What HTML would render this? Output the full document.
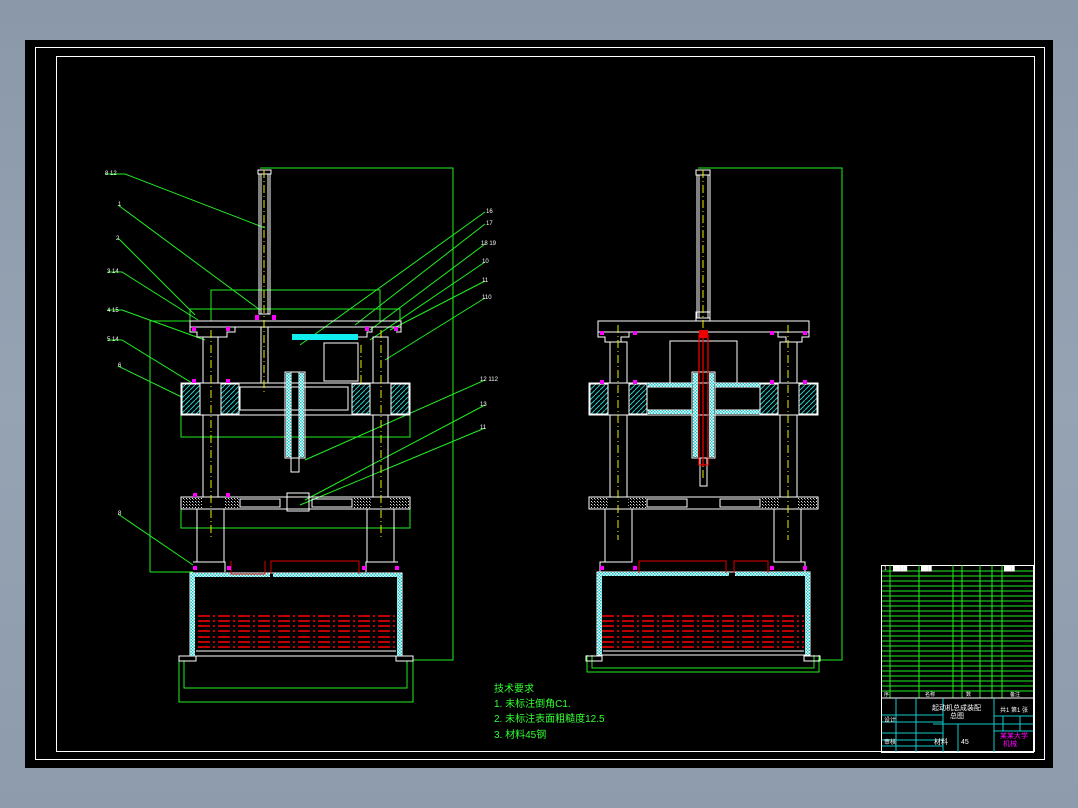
<!DOCTYPE html>
<html><head><meta charset="utf-8"><style>
html,body{margin:0;padding:0;width:1078px;height:808px;overflow:hidden;background:linear-gradient(#8a98aa,#95a3b3 50%,#8d9bad);}
svg{position:absolute;left:0;top:0}
text{font-family:"Liberation Sans","Noto Sans CJK SC",sans-serif;}
</style></head><body>
<svg width="1078" height="808" viewBox="0 0 1078 808">
<defs>
<pattern id="hc" width="5" height="5" patternUnits="userSpaceOnUse"><rect width="5" height="5" fill="#000"/><path d="M0 5L5 0" stroke="#2cc" stroke-width="1"/></pattern>
<pattern id="hw" width="3" height="3" patternUnits="userSpaceOnUse"><rect width="3" height="3" fill="#000"/><rect width="1" height="1" fill="#ddd"/><rect x="1" y="1" width="1" height="1" fill="#888"/></pattern>
<pattern id="dc" width="3" height="3" patternUnits="userSpaceOnUse"><rect width="3" height="3" fill="#fff"/><rect width="1.5" height="1.5" fill="#1cc"/><rect x="1.5" y="1.5" width="1.5" height="1.5" fill="#1cc"/></pattern>
</defs>
<rect x="25" y="40" width="1028" height="728" fill="#000"/>
<rect x="35.5" y="47.5" width="1009" height="712" fill="none" stroke="#fff" stroke-width="1"/>
<rect x="56.5" y="56.5" width="978" height="695" fill="none" stroke="#fff" stroke-width="1"/>

<!-- LEFT VIEW -->
<g fill="none" stroke-width="1">
<!-- green leader / dims -->
<g stroke="#2e2">
<polyline points="260,168 453,168 453,660 413,660"/>
<polyline points="150,572 150,321 190,321"/>
<polyline points="150,572 193,572"/>
<rect x="190" y="309" width="210" height="12"/>
<polyline points="211,321 211,290 380,290 380,321"/>
<rect x="181" y="415" width="229" height="22"/>
<rect x="181" y="509" width="229" height="19"/>
<polyline points="184,661 184,688 407,688 407,661"/>
<polyline points="179,661 179,702 413,702 413,661"/>
<path d="M105 174H125L265 228M118 205L260 310M118 238L195 315M108 272H122L198 320M108 310H122L205 340M108 340H122L192 383M118 366L198 405M118 514L193 565"/>
<path d="M485 212L300 345M485 224L355 325M485 244L370 330M485 262L370 340M485 281L390 330M485 298L385 360M485 380L305 460M485 405L305 500M485 428L300 505"/>
</g>
<!-- cylinder -->
<g stroke="#fff">
<rect x="258" y="170" width="13" height="4"/>
<rect x="259" y="174" width="11" height="140"/>
<line x1="261" y1="174" x2="261" y2="314"/><line x1="268" y1="174" x2="268" y2="314"/>
<rect x="190" y="321" width="211" height="6"/>
<path d="M190 327v5h7v5h30v-5h8v-5M372 327v5h-5v5h-10M401 327v5h-5"/>
<rect x="203" y="337" width="15" height="46"/>
<rect x="373" y="337" width="15" height="46"/>
<line x1="261" y1="327" x2="261" y2="383"/><line x1="268" y1="327" x2="268" y2="383"/>
<rect x="181" y="383" width="229" height="32"/>
<rect x="240" y="387" width="108" height="23"/>
<rect x="285" y="372" width="20" height="86"/>
<rect x="291" y="372" width="8" height="100"/>
<rect x="324" y="343" width="34" height="38"/>
<rect x="203" y="415" width="15" height="82"/>
<rect x="373" y="415" width="15" height="82"/>
<rect x="181" y="497" width="229" height="12"/>
<rect x="240" y="499" width="40" height="8"/>
<rect x="312" y="499" width="40" height="8"/>
<rect x="287" y="493" width="22" height="18"/>
<rect x="197" y="509" width="27" height="53"/>
<rect x="367" y="509" width="27" height="53"/>
<path d="M193 562h32v10M366 572v-10h32"/>
<rect x="190" y="573" width="212" height="83"/>
<line x1="196" y1="651" x2="396" y2="651"/>
<rect x="179" y="656" width="17" height="5"/><rect x="396" y="656" width="17" height="5"/>
</g>
<rect x="292" y="334" width="66" height="6" fill="#1ee" stroke="none"/>
<g fill="url(#hc)" stroke="#fff">
<rect x="182" y="384" width="18" height="30"/><rect x="221" y="384" width="18" height="30"/>
<rect x="352" y="384" width="18" height="30"/><rect x="391" y="384" width="18" height="30"/>
</g>
<rect x="286" y="373" width="5" height="84" fill="url(#dc)"/>
<rect x="299" y="373" width="5" height="84" fill="url(#dc)"/>
<g fill="url(#hw)"><rect x="182" y="498" width="20" height="10"/><rect x="224" y="498" width="15" height="10"/><rect x="353" y="498" width="19" height="10"/><rect x="390" y="498" width="19" height="10"/></g>
<g fill="url(#dc)"><rect x="190" y="573" width="5" height="83"/><rect x="397" y="573" width="5" height="83"/><rect x="195" y="573" width="75" height="4"/><rect x="273" y="573" width="124" height="4"/></g>
<g stroke="#ee0" stroke-dasharray="8,3,1,3"><line x1="264" y1="170" x2="264" y2="395"/><line x1="211" y1="330" x2="211" y2="540"/><line x1="381" y1="330" x2="381" y2="540"/><line x1="361" y1="345" x2="361" y2="383"/></g>
<g stroke="#f00" stroke-width="1.5" stroke-dasharray="12,3,2,3">
<line x1="198" y1="616" x2="397" y2="616"/><line x1="198" y1="621" x2="397" y2="621"/><line x1="198" y1="626" x2="397" y2="626"/><line x1="198" y1="631" x2="397" y2="631"/><line x1="198" y1="637" x2="397" y2="637"/><line x1="198" y1="642" x2="397" y2="642"/><line x1="198" y1="647" x2="397" y2="647"/>
</g>
<path d="M231 561V574H265V561M271 574V561H359V574" stroke="#d00"/>
<g fill="#f0f" stroke="none"><rect x="255" y="315" width="4" height="5"/><rect x="272" y="315" width="4" height="5"/><rect x="192" y="327" width="4" height="4"/><rect x="226" y="327" width="4" height="4"/><rect x="365" y="327" width="4" height="4"/><rect x="394" y="327" width="4" height="4"/><rect x="192" y="379" width="4" height="4"/><rect x="226" y="379" width="4" height="4"/><rect x="193" y="493" width="4" height="4"/><rect x="226" y="493" width="4" height="4"/><rect x="193" y="566" width="4" height="4"/><rect x="227" y="566" width="4" height="4"/><rect x="362" y="566" width="4" height="4"/><rect x="395" y="566" width="4" height="4"/></g>
</g>
<g fill="#fff" font-size="6">
<text x="105" y="175">8 12</text><text x="118" y="206">1</text><text x="116" y="240">2</text><text x="107" y="273">3 14</text><text x="107" y="312">4 15</text><text x="107" y="341">5 14</text><text x="118" y="367">6</text><text x="118" y="515">8</text>
<text x="486" y="213">16</text><text x="486" y="225">17</text><text x="481" y="245">18 19</text><text x="482" y="263">10</text><text x="482" y="282">11</text><text x="482" y="299">110</text><text x="480" y="381">12 112</text><text x="480" y="406">13</text><text x="480" y="429">11</text>
</g>

<!-- RIGHT VIEW -->
<g fill="none" stroke-width="1">
<g stroke="#2e2"><polyline points="698,168 842,168 842,660 818,660"/><polyline points="592,655 592,668 814,668 814,655"/><polyline points="587,655 587,672 819,672 819,655"/></g>
<g stroke="#fff">
<rect x="696" y="170" width="14" height="5"/>
<rect x="697" y="175" width="13" height="143"/>
<line x1="699" y1="175" x2="699" y2="318"/><line x1="708" y1="175" x2="708" y2="318"/>
<rect x="696" y="312" width="14" height="9"/>
<rect x="598" y="321" width="211" height="11"/>
<path d="M598 332v5h7v5h16v-5h8v-5M809 332v5h-7v5h-16v-5h-8v-5"/>
<rect x="610" y="342" width="17" height="41"/><rect x="780" y="342" width="17" height="41"/>
<rect x="670" y="341" width="67" height="42"/>
<rect x="589" y="383" width="229" height="32"/>
<rect x="647" y="387" width="45" height="23"/><rect x="715" y="387" width="45" height="23"/>
<rect x="692" y="372" width="23" height="86"/>
<rect x="610" y="415" width="17" height="82"/><rect x="780" y="415" width="17" height="82"/>
<rect x="589" y="497" width="229" height="12"/>
<rect x="647" y="499" width="40" height="8"/><rect x="720" y="499" width="40" height="8"/>
<rect x="605" y="509" width="27" height="53"/><rect x="774" y="509" width="27" height="53"/>
<path d="M600 572v-10h32M774 562h31v10"/>
<rect x="597" y="572" width="213" height="83"/>
<line x1="603" y1="651" x2="804" y2="651"/>
<rect x="586" y="656" width="16" height="5"/><rect x="804" y="656" width="16" height="5"/>
<rect x="700" y="458" width="7" height="28"/>
</g>
<g fill="url(#hc)" stroke="#fff">
<rect x="590" y="384" width="18" height="30"/><rect x="629" y="384" width="18" height="30"/>
<rect x="760" y="384" width="18" height="30"/><rect x="799" y="384" width="18" height="30"/>
</g>
<rect x="693" y="373" width="5" height="84" fill="url(#dc)"/><rect x="709" y="373" width="5" height="84" fill="url(#dc)"/>
<g fill="url(#dc)"><rect x="648" y="383" width="44" height="4"/><rect x="715" y="383" width="45" height="4"/><rect x="648" y="410" width="44" height="4"/><rect x="715" y="410" width="45" height="4"/></g>
<g fill="url(#hw)"><rect x="590" y="498" width="19" height="10"/><rect x="628" y="498" width="18" height="10"/><rect x="761" y="498" width="18" height="10"/><rect x="798" y="498" width="19" height="10"/></g>
<g fill="url(#dc)"><rect x="597" y="572" width="5" height="83"/><rect x="805" y="572" width="5" height="83"/><rect x="602" y="572" width="127" height="4"/><rect x="735" y="572" width="70" height="4"/></g>
<g stroke="#ee0" stroke-dasharray="8,3,1,3"><line x1="703" y1="170" x2="703" y2="480"/><line x1="618" y1="325" x2="618" y2="540"/><line x1="788" y1="325" x2="788" y2="540"/></g>
<g stroke="#f00" stroke-width="1.2"><rect x="699" y="335" width="9" height="130"/><line x1="703" y1="335" x2="703" y2="465"/></g>
<rect x="699" y="330" width="9" height="8" fill="#e00"/>
<g stroke="#f00" stroke-width="1.5" stroke-dasharray="12,3,2,3">
<line x1="602" y1="616" x2="804" y2="616"/><line x1="602" y1="621" x2="804" y2="621"/><line x1="602" y1="626" x2="804" y2="626"/><line x1="602" y1="631" x2="804" y2="631"/><line x1="602" y1="637" x2="804" y2="637"/><line x1="602" y1="642" x2="804" y2="642"/><line x1="602" y1="647" x2="804" y2="647"/>
</g>
<path d="M639 573V561H726V573M734 573V561H768V573" stroke="#d00"/>
<g fill="#f0f"><rect x="600" y="331" width="4" height="4"/><rect x="633" y="331" width="4" height="4"/><rect x="770" y="331" width="4" height="4"/><rect x="803" y="331" width="4" height="4"/><rect x="600" y="566" width="4" height="4"/><rect x="633" y="566" width="4" height="4"/><rect x="770" y="566" width="4" height="4"/><rect x="803" y="566" width="4" height="4"/><rect x="600" y="380" width="4" height="4"/><rect x="633" y="380" width="4" height="4"/><rect x="770" y="380" width="4" height="4"/><rect x="803" y="380" width="4" height="4"/></g>
</g>

<!-- tech requirements -->
<g fill="#3f3" font-size="10">
<text x="494" y="692">技术要求</text>
<text x="494" y="707">1. 未标注倒角C1.</text>
<text x="494" y="722">2. 未标注表面粗糙度12.5</text>
<text x="494" y="738">3. 材料45钢</text>
</g>

<!-- TITLE BLOCK -->
<g fill="none" stroke-width="1">
<rect x="881.5" y="565.5" width="152" height="187" stroke="#fff"/>
<g stroke="#2e2">
<path d="M882 571H1033M882 576H1033M882 581H1033M882 586H1033M882 591H1033M882 596H1033M882 601H1033M882 606H1033M882 611H1033M882 616H1033M882 621H1033M882 626H1033M882 631H1033M882 636H1033M882 641H1033M882 646H1033M882 651H1033M882 656H1033M882 661H1033M882 666H1033M882 671H1033M882 676H1033M882 681H1033M882 686H1033M882 691H1033"/>
<path d="M890 565V698M919 565V698M953 565V698M962 565V698M980 565V698M992 565V698M1002 565V698"/>
</g>
<line x1="882" y1="698" x2="1033" y2="698" stroke="#fff"/>
<g stroke="#1cc">
<path d="M882 715H943M882 722H943M882 733H943M882 740H943M882 746H943M896 698V752M916 698V752M943 698V752M933 724H1033M958 724V752M994 698V752M994 716H1033M994 731H1033M1003 716V731M1020 716V731"/>
</g>
</g>
<g fill="#fff" font-size="5">
<text x="884" y="570">1</text><text x="893" y="570">████</text><text x="921" y="570">███</text><text x="1004" y="570">███</text>
<text x="884" y="696">序</text><text x="925" y="696">名称</text><text x="966" y="696">数</text><text x="1010" y="696">备注</text>
<text x="932" y="710" font-size="7">起动机总成装配</text><text x="950" y="718" font-size="7">总图</text>
<text x="1000" y="712" font-size="6">共1  第1  张</text>
<text x="934" y="744" font-size="7">材料</text><text x="961" y="744" font-size="7">45</text>
<text x="884" y="722" font-size="6">设计</text><text x="884" y="744" font-size="6">审核</text>
</g>
<text x="1000" y="738" fill="#f0f" font-size="7" font-family="Liberation Sans, Noto Sans CJK SC, sans-serif">某某大学</text>
<text x="1003" y="746" fill="#f0f" font-size="7" font-family="Liberation Sans, Noto Sans CJK SC, sans-serif">机械</text>
</svg>
</body></html>
